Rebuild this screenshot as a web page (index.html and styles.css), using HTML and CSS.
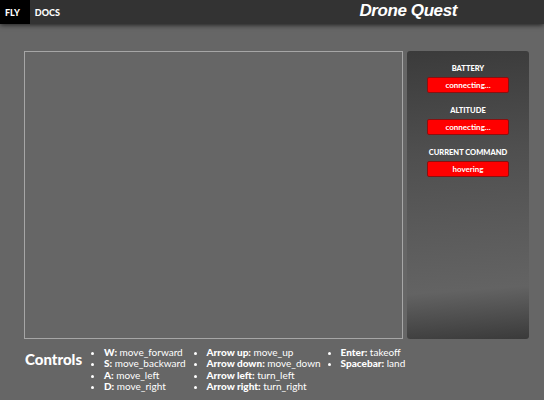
FILE: index.html
```html
<!DOCTYPE html>
<html>
<head>
<meta charset="utf-8">
<link rel="stylesheet" href="styles.css">
</head>
<body>
<nav class="nav">
  <a class="tab active">FLY</a>
  <a class="tab">DOCS</a>
  <span class="brand">Drone Quest</span>
</nav>
<main class="main">
  <div class="frame"></div>
  <aside class="panel">
    <div class="stat">
      <div class="label">BATTERY</div>
      <div class="value">connecting...</div>
    </div>
    <div class="stat">
      <div class="label">ALTITUDE</div>
      <div class="value">connecting...</div>
    </div>
    <div class="stat">
      <div class="label">CURRENT COMMAND</div>
      <div class="value">hovering</div>
    </div>
  </aside>
</main>
<section class="controls">
  <h2 class="title">Controls</h2>
  <ul class="list">
    <li><b>W:</b> move_forward</li>
    <li><b>S:</b> move_backward</li>
    <li><b>A:</b> move_left</li>
    <li><b>D:</b> move_right</li>
  </ul>
  <ul class="list list-mid">
    <li><b>Arrow up:</b> move_up</li>
    <li><b>Arrow down:</b> move_down</li>
    <li><b>Arrow left:</b> turn_left</li>
    <li><b>Arrow right:</b> turn_right</li>
  </ul>
  <ul class="list list-last">
    <li><b>Enter:</b> takeoff</li>
    <li><b>Spacebar:</b> land</li>
  </ul>
</section>
</body>
</html>
```
FILE: styles.css
```css
html, body {
  margin: 0;
  padding: 0;
}
body {
  background: #666666;
  color: #fff;
  font-family: Lato, "Open Sans", sans-serif;
  width: 544px;
  height: 400px;
  overflow: hidden;
}
.nav {
  display: flex;
  align-items: stretch;
  height: 24px;
  background: #333333;
  box-shadow: 0 1px 5px rgba(0,0,0,0.7);
  position: relative;
}
.tab {
  display: flex;
  align-items: center;
  padding: 0 9px 0 5px;
  font-size: 9px;
  font-weight: 900;
  color: #fff;
}
.tab.active {
  background: #000;
  padding: 0 10px 0 5px;
}
.brand {
  margin-left: auto;
  padding-right: 87px;
  font-family: "Liberation Sans", Arial, sans-serif;
  font-weight: bold;
  font-style: italic;
  font-size: 17px;
  line-height: 21px;
  letter-spacing: -0.4px;
}
.main {
  display: flex;
  gap: 4px;
  padding: 27px 0 0 24px;
}
.frame {
  width: 377px;
  height: 286px;
  border: 1px solid #a6a6a6;
}
.panel {
  width: 122px;
  height: 288px;
  border-radius: 3px;
  background: linear-gradient(176deg, #3b3b3b 0%, #4f4f4f 35%, #5a5a5a 60%, #636363 82%, #4a4a4a 93%, #3a3a3a 100%);
  display: flex;
  flex-direction: column;
  align-items: center;
  padding-top: 13px;
  box-sizing: border-box;
  gap: 13px;
}
.stat {
  display: flex;
  flex-direction: column;
  align-items: center;
  gap: 3px;
}
.label {
  font-size: 7.5px;
  font-weight: 900;
  line-height: 10px;
}
.value {
  width: 80px;
  height: 14px;
  background: #ff0000;
  border: 1px solid #8a1010;
  border-radius: 2px;
  font-size: 8px;
  font-weight: bold;
  display: flex;
  align-items: center;
  justify-content: center;
}
.controls {
  display: flex;
  align-items: flex-start;
  padding: 8px 0 0 25px;
}
.title {
  margin: 4px 0 0 0;
  font-size: 15px;
  font-weight: 900;
  line-height: 16px;
  width: 58px;
}
.list {
  margin: 0;
  padding: 0 0 0 21px;
  font-size: 10px;
  line-height: 11.3px;
}
.list-mid {
  padding-left: 21px;
}
.list-last {
  padding-left: 20px;
}
.list b {
  font-weight: 900;
}
```
